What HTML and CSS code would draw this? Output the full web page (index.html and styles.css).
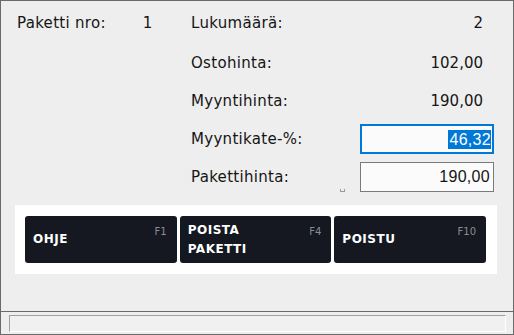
FILE: index.html
```html
<!DOCTYPE html>
<html lang="fi">
<head>
  <meta charset="UTF-8" />
  <title>Paketti</title>
<link rel="stylesheet" href="styles.css">
</head>
<body>
  <div class="window">
    <div class="content">
      <div class="fields">
        <div class="left">
          <span class="label">Paketti nro:</span>
          <span class="label nro">1</span>
        </div>

        <div class="grid">
          <span class="label first">Lukumäärä:</span>
          <span class="value first">2</span>

          <span class="label">Ostohinta:</span>
          <span class="value">102,00</span>

          <span class="label">Myyntihinta:</span>
          <span class="value">190,00</span>

          <span class="label">Myyntikate-%:</span>
          <div class="input focused"><span class="selected">46,32</span></div>

          <span class="label">Pakettihinta:</span>
          <div class="input">190,00<span class="grip"></span></div>
        </div>
      </div>

      <div class="button-panel">
        <button class="fkey"><span class="caption">OHJE</span><span class="key">F1</span></button>
        <button class="fkey"><span class="caption">POISTA<br>PAKETTI</span><span class="key">F4</span></button>
        <button class="fkey"><span class="caption">POISTU</span><span class="key">F10</span></button>
      </div>
    </div>

    <div class="status">
      <div class="status-box"></div>
    </div>
  </div>
</body>
</html>
```

FILE: styles.css
```css
:root {
  --bg: #eeeeee;
  --border: #6a6a6a;
  --text: #151515;
  --button: #151820;
  --accent: #0078d7;
}

body {
  margin: 0;
  font-family: 'DejaVu Sans', sans-serif;
  color: var(--text);
}

.window {
  width: 514px;
  height: 335px;
  box-sizing: border-box;
  border: 1px solid var(--border);
  background-color: var(--bg);
  display: flex;
  flex-direction: column;
}

.content {
  flex: 1;
  padding: 7px 16px 0 13px;
}

.fields {
  display: flex;
  padding-right: 3px;
}

.left {
  width: 177px;
  height: 30px;
  padding-left: 3px;
  box-sizing: border-box;
  display: flex;
  align-items: center;
}

.left .nro {
  margin-left: 37px;
}

.label {
  font-size: 15px;
  letter-spacing: 0.3px;
}

.grid {
  flex: 1;
  display: grid;
  grid-template-columns: 1fr 134px;
  grid-template-rows: 32px repeat(4, 30px);
  row-gap: 8px;
  align-items: center;
}

.grid .first {
  align-self: start;
  line-height: 30px;
}

.value {
  font-size: 15px;
  text-align: right;
  padding-right: 11px;
}

.input {
  height: 30px;
  box-sizing: border-box;
  border: 1px solid #7a7a7a;
  background-color: #fbfbfb;
  font-family: 'Liberation Sans', sans-serif;
  font-size: 16px;
  letter-spacing: 0.3px;
  display: flex;
  align-items: center;
  justify-content: flex-end;
  padding-right: 3px;
  position: relative;
}

.input.focused {
  border: 2px solid var(--accent);
  padding-right: 1px;
}

.selected {
  background-color: var(--accent);
  color: #ffffff;
  line-height: 19px;
  padding-left: 1px;
}

.grip {
  position: absolute;
  left: -21px;
  bottom: -1px;
  width: 3px;
  height: 2px;
  border: 1px solid #9a9a9a;
  border-top: none;
}

.button-panel {
  margin: 13px 0 0 1px;
  background-color: #ffffff;
  padding: 11px 11px 11px 10px;
  display: flex;
  gap: 3px;
}

.fkey {
  flex: 1;
  height: 47px;
  border: none;
  border-radius: 3px;
  background-color: var(--button);
  color: #ffffff;
  font-family: 'DejaVu Sans', sans-serif;
  display: flex;
  justify-content: space-between;
  align-items: center;
  padding: 0 10px 0 8px;
  text-align: left;
}

.caption {
  font-size: 12px;
  font-weight: bold;
  line-height: 19px;
  letter-spacing: 0.5px;
}

.key {
  align-self: flex-start;
  margin-top: 10px;
  font-size: 10px;
  color: #8a8c92;
}

.status {
  border-top: 1px solid var(--border);
  padding: 3px 7px 2px 8px;
}

.status-box {
  height: 17px;
  box-sizing: border-box;
  border: 1px solid #ffffff;
  border-top-color: #a0a0a0;
  border-left-color: #a0a0a0;
  background-color: #f0f0f0;
}
```
